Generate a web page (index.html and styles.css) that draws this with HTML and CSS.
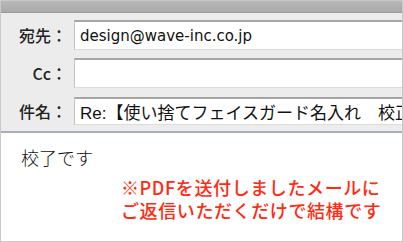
FILE: index.html
```html
<!DOCTYPE html>
<html lang="ja">
<head>
<meta charset="utf-8">
<link rel="stylesheet" href="styles.css">
</head>
<body>
<div class="frame">
  <div class="topbar"></div>
  <div class="header">
    <div class="row">
      <div class="label">宛先：</div>
      <div class="field mail">design@wave-inc.co.jp</div>
    </div>
    <div class="row">
      <div class="label">Cc：</div>
      <div class="field"></div>
    </div>
    <div class="row">
      <div class="label">件名：</div>
      <div class="field subject">Re:【使い捨てフェイスガード名入れ　校正】</div>
    </div>
  </div>
  <div class="body">
    <p class="msg">校了です</p>
    <p class="note">※PDFを送付しましたメールに<br>ご返信いただくだけで結構です</p>
  </div>
</div>
</body>
</html>
```
FILE: styles.css
```css
html, body {
  margin: 0;
  padding: 0;
  background: #fff;
}
.frame {
  width: 401px;
  height: 240px;
  border: 1px solid #c9c9c9;
  overflow: hidden;
  display: flex;
  flex-direction: column;
  font-family: "Noto Sans CJK JP", sans-serif;
}
.topbar {
  height: 11px;
  background: linear-gradient(#b9b9b9, #a9a9a9);
  border-bottom: 1px solid #999;
}
.header {
  background: #ececec;
  padding: 7px 0 0 0;
  border-bottom: 2px solid #a9afb6;
  display: flex;
  flex-direction: column;
  gap: 8px;
  height: 120px;
  box-sizing: border-box;
}
.row {
  display: flex;
  align-items: center;
  height: 30px;
}
.label {
  width: 73px;
  flex: none;
  text-align: right;
  font-size: 16px;
  color: #222;
  font-weight: 500;
  box-sizing: border-box;
  padding-right: 7px;
}
.field {
  flex: 1;
  height: 30px;
  box-sizing: border-box;
  background: #fff;
  border-top: 2px solid #a6a6a6;
  border-left: 1px solid #c4c4c4;
  border-bottom: 1px solid #dcdcdc;
  padding-left: 5px;
  display: flex;
  align-items: center;
  white-space: nowrap;
  overflow: hidden;
  color: #111;
}
.mail {
  font-family: "DejaVu Sans", sans-serif;
  font-size: 15px;
}
.subject {
  font-family: "Liberation Sans", "Noto Sans CJK JP", sans-serif;
  font-size: 17px;
  height: 28px;
}
.body {
  flex: 1;
  background: #fff;
  padding: 12px 0 0 20px;
}
.msg {
  margin: 0;
  font-size: 18px;
  color: #111;
  font-weight: 300;
  line-height: 24px;
}
.note {
  margin: 7px 0 0 100px;
  font-size: 18px;
  line-height: 23px;
  letter-spacing: 0.6px;
  color: #ff2a10;
  font-weight: 500;
  white-space: nowrap;
}
```
